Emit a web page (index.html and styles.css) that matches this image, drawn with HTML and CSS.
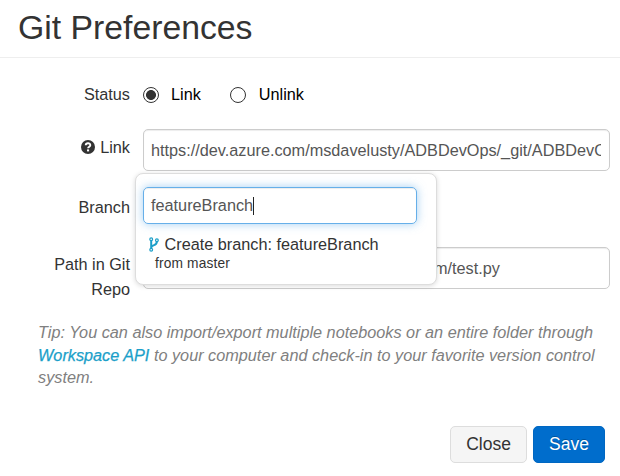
FILE: index.html
```
<!DOCTYPE html>
<html lang="en">
<head>
<meta charset="utf-8">
<title>Git Preferences</title>
<link rel="stylesheet" href="styles.css">
</head>
<body>
<header class="header"><h1 class="title"><span>Git Preferences</span></h1></header>
<main class="form">
  <div class="row row-status">
    <div class="label"><span>Status</span></div>
    <div class="options">
      <span class="radio checked"></span><span class="option-text">Link</span>
      <span class="radio second"></span><span class="option-text">Unlink</span>
    </div>
  </div>
  <div class="row row-link">
    <div class="label">
      <svg class="help" viewBox="0 0 14 14"><circle cx="7" cy="7" r="7" fill="#333"/><path d="M4.7 5.2C4.9 2.6 9.4 2.7 9.3 5.3C9.2 6.8 7.2 6.7 7.1 8.3" fill="none" stroke="#fff" stroke-width="1.9"/><path d="M6 9.4h2.1v2H6z" fill="#fff"/></svg>
      <span>Link</span>
    </div>
    <div class="field"><div class="clip"><span class="url">https://dev.azure.com/msdavelusty/ADBDevOps/_git/ADBDevOps</span></div></div>
  </div>
  <div class="row row-branch">
    <div class="label"><span>Branch</span></div>
    <div class="anchor">
      <div class="menu">
        <div class="search"><span class="query">featureBranch</span><span class="caret"></span></div>
        <div class="create">
          <svg class="fork" viewBox="0 0 10 15" fill="none" stroke="#1b9fc9"><path d="M2.2 3.5v8M7.9 4.5c0 3.1-2.7 3.6-4 4.2-1 .5-1.5 1-1.7 2" stroke-width="2"/><g stroke-width="1.2" fill="#fff"><circle cx="2.2" cy="2.2" r="1.4"/><circle cx="7.9" cy="3.2" r="1.4"/><circle cx="2.2" cy="12.7" r="1.4"/></g></svg>
          <span class="create-text">Create branch: featureBranch</span>
        </div>
        <div class="from"><span>from master</span></div>
      </div>
    </div>
  </div>
  <div class="row row-path">
    <div class="label"><span>Path in Git</span><br><span>Repo</span></div>
    <div class="field path"><span>m/test.py</span></div>
  </div>
  <p class="tip"><span>Tip: You can also import/export multiple notebooks or an entire folder through</span><br><span><a class="link">Workspace API</a> to your computer and check-in to your favorite version control</span><br><span>system.</span></p>
</main>
<footer class="footer"><div class="button"><span>Close</span></div><div class="button primary"><span>Save</span></div></footer>
</body>
</html>
```

FILE: styles.css
```
* { box-sizing: border-box; }
body { margin: 0; width: 620px; height: 476px; overflow: hidden; background: #fff; color: #333; font: 16.25px/25px "Liberation Sans", Arial, sans-serif; }
.header { height: 58px; padding: 2px 18px 0; border-bottom: 1px solid #eee; }
.title { margin: 0; font-size: 33.75px; line-height: 50px; font-weight: 400; white-space: nowrap; }
.form { height: 368px; }
.row { display: flex; }
.label { width: 130px; text-align: right; margin-right: 13px; flex: none; }
.row-status { height: 71px; padding-top: 24px; }
.options { display: flex; align-items: center; height: 25px; color: #000; }
.radio { width: 16px; height: 16px; border: 1px solid #333; border-radius: 50%; margin-right: 12px; }
.checked { background: radial-gradient(circle, #333 4.6px, transparent 5.3px); }
.second { margin-left: 29px; margin-right: 13px; }
.row-link { height: 58px; }
.row-link .label { padding-top: 6px; }
.help { width: 14px; height: 14px; vertical-align: -1px; margin-right: 1px; }
.field { width: 467px; height: 42px; border: 1px solid #ccc; border-radius: 5px; box-shadow: inset 0 1px 1px rgba(0,0,0,.075); padding: 8px 8px 0 7px; color: #555; white-space: nowrap; }
.clip { overflow: hidden; }
.row-branch { height: 60px; }
.row-branch .label { padding-top: 8px; }
.anchor { position: relative; }
.menu { position: absolute; left: -8px; top: -14px; width: 302px; height: 112px; padding: 13px 7px; background: #fff; border: 1px solid #ddd; border-radius: 8px; box-shadow: 0 1px 5px rgba(0,0,0,.15); white-space: nowrap; }
.search { display: flex; width: 274px; height: 37px; padding: 5px 7px; border: 1px solid #66afe9; border-radius: 5px; color: #555; box-shadow: inset 0 1px 1px rgba(0,0,0,.075), 0 0 10px rgba(102,175,233,.6); }
.caret { width: 1px; height: 18px; margin-top: 4px; background: #222; }
.create { display: flex; height: 20px; margin-top: 10px; line-height: 20px; padding-left: 6px; }
.fork { width: 10px; height: 15px; margin: 3px 5.5px 0 0; }
.from { font-size: 13.75px; line-height: 20px; padding-left: 12px; letter-spacing: .15px; }
.row-path { height: 74px; }
.row-path .label { padding-top: 5px; }
.path { padding-left: 290px; }
.tip { margin: 0 0 0 38px; font-size: 16.25px; line-height: 22.5px; font-style: italic; color: #808080; white-space: nowrap; }
.link { color: #1b9fc9; -webkit-text-stroke: .25px #1b9fc9; }
.footer { display: flex; justify-content: flex-end; gap: 6px; padding-right: 15px; }
.button { width: 77px; height: 37px; border: 1px solid #ddd; border-radius: 5px; background: #f5f5f5; font-size: 17.5px; line-height: 34px; text-align: center; }
.primary { width: 72px; background: #006dcc; border-color: #0067c2; color: #fff; text-shadow: 0 -1px 0 rgba(0,0,0,.25); }
```
